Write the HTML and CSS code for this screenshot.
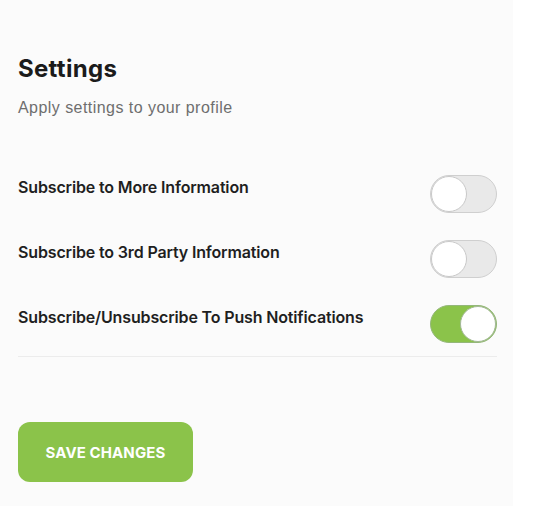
FILE: index.html
```html
<!DOCTYPE html>
<html lang="en">
<head>
<meta charset="utf-8">
<title>Settings</title>
<link rel="stylesheet" href="styles.css">
</head>
<body>
<main class="panel">
  <h1 class="title">Settings</h1>
  <p class="subtitle">Apply settings to your profile</p>
  <ul class="options">
    <li class="option">
      <span class="option-label">Subscribe to More Information</span>
      <span class="toggle"><span class="knob"></span></span>
    </li>
    <li class="option">
      <span class="option-label">Subscribe to 3rd Party Information</span>
      <span class="toggle"><span class="knob"></span></span>
    </li>
    <li class="option">
      <span class="option-label">Subscribe/Unsubscribe To Push Notifications</span>
      <span class="toggle is-on"><span class="knob"></span></span>
    </li>
  </ul>
  <div class="actions">
    <button class="save-btn" type="button">SAVE CHANGES</button>
  </div>
</main>
</body>
</html>
```
FILE: styles.css
```css
html, body {
  margin: 0;
  padding: 0;
  background: #ffffff;
}

.panel {
  box-sizing: border-box;
  width: 513px;
  min-height: 506px;
  background: #fbfbfb;
  padding: 54px 16px 0 18px;
  font-family: Inter, "Liberation Sans", sans-serif;
}

.title {
  margin: 0;
  font-size: 24px;
  line-height: 29px;
  font-weight: 700;
  color: #1b1b1b;
  letter-spacing: 0.3px;
}

.subtitle {
  margin: 16px 0 0;
  font-family: "Liberation Sans", Arial, sans-serif;
  font-size: 16px;
  line-height: 18px;
  color: #6e6e6e;
  letter-spacing: 0.45px;
}

.options {
  list-style: none;
  margin: 58px 0 0;
  padding: 0 0 13px;
  display: flex;
  flex-direction: column;
  gap: 27px;
  border-bottom: 1px solid #ececec;
}

.option {
  display: flex;
  align-items: flex-start;
  justify-content: space-between;
}

.option-label {
  font-size: 16px;
  line-height: 24px;
  font-weight: 600;
  color: #1f1f1f;
  letter-spacing: -0.15px;
}

.toggle {
  box-sizing: border-box;
  width: 67px;
  height: 38px;
  border-radius: 19px;
  background: #e9e9e9;
  border: 1px solid #cfcfcf;
  display: flex;
  justify-content: flex-start;
  align-items: center;
}

.toggle .knob {
  box-sizing: border-box;
  width: 36px;
  height: 36px;
  border-radius: 50%;
  background: #ffffff;
  border: 1px solid #c9c9c9;
}

.toggle.is-on {
  background: #8bc34a;
  border-color: #94b77a;
  justify-content: flex-end;
}

.toggle.is-on .knob {
  border-color: #a3b898;
}

.actions {
  padding-top: 65px;
}

.save-btn {
  width: 175px;
  height: 60px;
  border: none;
  border-radius: 12px;
  background: #8bc34a;
  color: #ffffff;
  font-family: Inter, "Liberation Sans", sans-serif;
  font-size: 15px;
  font-weight: 700;
  letter-spacing: 0.1px;
  padding: 0;
  cursor: pointer;
}
```
